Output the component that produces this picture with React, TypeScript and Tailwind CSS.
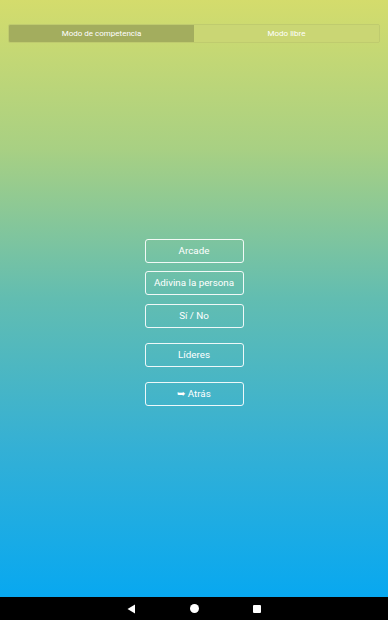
const MENU = [
  { label: "Arcade", gap: "mt-0" },
  { label: "Adivina la persona", gap: "mt-[8px]" },
  { label: "Sí / No", gap: "mt-[9px]" },
  { label: "Líderes", gap: "mt-[15px]" },
  { label: "➥ Atrás", gap: "mt-[15px]" },
];

function NavBar() {
  return (
    <div className="flex h-[23px] shrink-0 items-center justify-center bg-black">
      <div className="flex w-[134px] items-center justify-between">
        <svg width="9" height="10" viewBox="0 0 9 10">
          <path d="M8 0.5 L0.5 5 L8 9.5 Z" fill="#fff" />
        </svg>
        <span className="h-[9px] w-[9px] rounded-full bg-white" />
        <span className="h-[8px] w-[8px] rounded-[1px] bg-white" />
      </div>
    </div>
  );
}

export default function App() {
  return (
    <div
      className="flex h-[620px] w-[388px] flex-col overflow-hidden"
      style={{ fontFamily: "Roboto, 'Liberation Sans', sans-serif" }}
    >
      <div className="flex flex-1 flex-col bg-[linear-gradient(180deg,#d4dc6c_0%,#a8d083_25%,#62bdb1_50%,#34b0d5_75%,#08a8f0_100%)]">
        {/* mode tabs */}
        <div className="mx-2 mt-[24px] flex h-[19px] overflow-hidden rounded-[2px] border border-[#bfcb6e]">
          <div className="flex flex-1 items-center justify-center bg-[#a3ad5e] text-[8px] text-white">
            Modo de competencia
          </div>
          <div className="flex flex-1 items-center justify-center bg-[#cad674] text-[8px] text-white">
            Modo libre
          </div>
        </div>

        <div className="mt-[196px] flex flex-col items-center">
          {MENU.map((m) => (
            <button
              key={m.label}
              className={`${m.gap} flex h-[24px] w-[99px] items-center justify-center rounded-[3px] border-[1.5px] border-white/90 text-[9.8px] text-white`}
            >
              {m.label}
            </button>
          ))}
        </div>
      </div>
      <NavBar />
    </div>
  );
}
